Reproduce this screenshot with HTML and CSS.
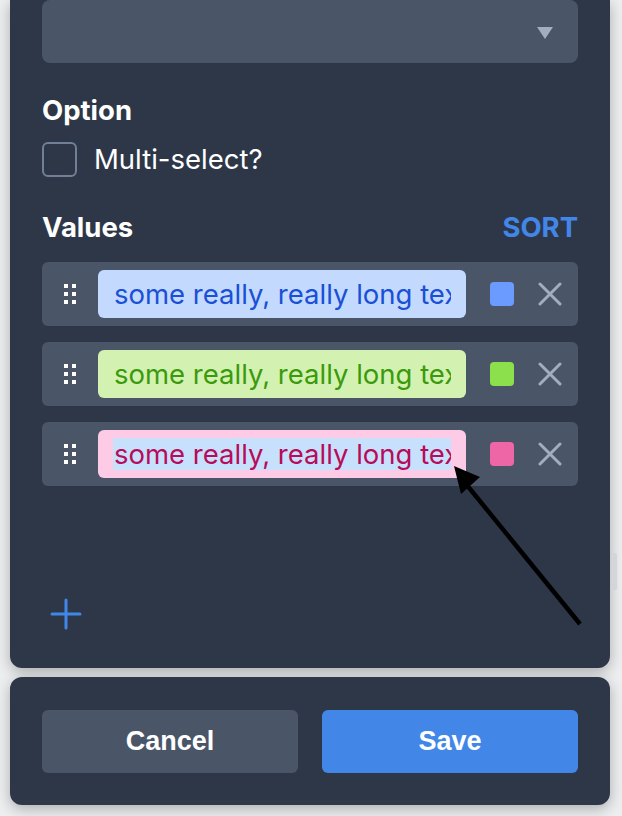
FILE: index.html
```html
<!DOCTYPE html>
<html>
<head>
<meta charset="utf-8">
<link rel="stylesheet" href="styles.css">
</head>
<body>
<div class="page">
  <div class="panel main">
    <div class="dropdown"><span class="caret"></span></div>
    <div class="heading">Option</div>
    <label class="check-row"><span class="checkbox"></span><span>Multi-select?</span></label>
    <div class="values-head"><span class="heading">Values</span><span class="sort">SORT</span></div>
    <div class="rows">
      <div class="row">
        <span class="handle"><i></i><i></i><i></i><i></i><i></i><i></i></span>
        <div class="field blue"><div class="clip"><span>some really, really long text</span></div></div>
        <span class="swatch sw-blue"></span>
        <svg class="x" width="24" height="24" viewBox="0 0 24 24"><path d="M2 2L22 22M22 2L2 22" stroke="#a0aec0" stroke-width="3" stroke-linecap="round"/></svg>
      </div>
      <div class="row">
        <span class="handle"><i></i><i></i><i></i><i></i><i></i><i></i></span>
        <div class="field green"><div class="clip"><span>some really, really long text</span></div></div>
        <span class="swatch sw-green"></span>
        <svg class="x" width="24" height="24" viewBox="0 0 24 24"><path d="M2 2L22 22M22 2L2 22" stroke="#a0aec0" stroke-width="3" stroke-linecap="round"/></svg>
      </div>
      <div class="row">
        <span class="handle"><i></i><i></i><i></i><i></i><i></i><i></i></span>
        <div class="field pink"><div class="clip"><span class="sel">some really, really long text</span></div></div>
        <span class="swatch sw-pink"></span>
        <svg class="x" width="24" height="24" viewBox="0 0 24 24"><path d="M2 2L22 22M22 2L2 22" stroke="#a0aec0" stroke-width="3" stroke-linecap="round"/></svg>
      </div>
    </div>
    <svg class="plus" width="32" height="32" viewBox="0 0 32 32"><path d="M16 2V30M2 16H30" stroke="#4287e8" stroke-width="3" stroke-linecap="round"/></svg>
  </div>
  <div class="panel footer">
    <button class="btn cancel">Cancel</button>
    <button class="btn save">Save</button>
  </div>
  <span class="scroll"></span>
  <svg class="arrow" width="622" height="816" viewBox="0 0 622 816"><path d="M580 624L466 484" stroke="#000" stroke-width="4.5"/><path d="M454 466L480 477L461 494Z" fill="#000"/></svg>
</div>
</body>
</html>
```
FILE: styles.css
```css
html, body { margin: 0; padding: 0; }
body {
  background: #eceef0;
  font-family: Inter, "Noto Sans", sans-serif;
  width: 622px;
  height: 816px;
  overflow: hidden;
}
.page { position: relative; padding: 0 12px 0 10px; }
.panel {
  background: #2d3748;
  width: 600px;
  box-sizing: border-box;
  color: #fff;
  box-shadow: 0 4px 14px rgba(0,0,0,0.28);
}
.main {
  border-radius: 0 0 12px 12px;
  padding: 0 32px 38px;
  display: flex;
  flex-direction: column;
}
.dropdown {
  height: 63px;
  background: #4a5568;
  border-radius: 8px;
  display: flex;
  justify-content: flex-end;
  align-items: center;
  padding-right: 25px;
}
.caret {
  width: 0; height: 0;
  border-left: 8px solid transparent;
  border-right: 8px solid transparent;
  border-top: 12px solid #a0aec0;
  margin-top: 2px;
}
.heading {
  font-size: 27.5px;
  font-weight: 700;
  line-height: 32px;
}
.main > .heading { margin-top: 31px; }
.check-row {
  display: flex;
  align-items: center;
  gap: 17px;
  margin-top: 16px;
  font-size: 27.5px;
  line-height: 35px;
}
.checkbox {
  width: 31px; height: 31px;
  border: 2.5px solid #718096;
  border-radius: 6px;
  flex: none;
}
.values-head {
  display: flex;
  justify-content: space-between;
  align-items: center;
  margin-top: 33px;
}
.sort {
  color: #4287e8;
  font-size: 27.5px;
  font-weight: 700;
}
.rows {
  display: flex;
  flex-direction: column;
  gap: 16px;
  margin-top: 18px;
}
.row {
  height: 64px;
  background: #4a5568;
  border-radius: 6px;
  display: flex;
  align-items: center;
  padding: 0 16px 0 22px;
}
.handle {
  display: grid;
  grid-template-columns: 4px 4px;
  column-gap: 4px;
  row-gap: 4px;
  width: 12px;
  margin-right: 22px;
}
.handle i { display: block; width: 4px; height: 4px; background: #fff; }
.field {
  width: 368px;
  height: 48px;
  box-sizing: border-box;
  border-radius: 6px;
  padding: 0 15px 0 15px;
  margin-right: 24px;
  flex: none;
  display: flex;
  align-items: center;
}
.clip {
  flex: 1;
  overflow: hidden;
  white-space: nowrap;
  font-size: 27.5px;
  line-height: 32px;
}
.clip span { padding-left: 1px; }
.blue { background: #c3dafe; color: #1a4fd6; }
.green { background: #d3f2b2; color: #3b9a0c; }
.pink { background: #fecbe7; color: #b80b5a; }
.sel { background: #c7e1fd; }
.swatch { width: 24px; height: 24px; border-radius: 4px; margin-right: 24px; flex: none; }
.sw-blue { background: #6b9bff; }
.sw-green { background: #8be04c; }
.sw-pink { background: #ef66a6; }
.x { flex: none; }
.plus { margin-top: 112px; margin-left: 8px; }
.footer {
  margin-top: 9px;
  border-radius: 12px;
  padding: 33px 32px 32px;
  display: flex;
  gap: 24px;
}
.btn {
  flex: 1;
  height: 63px;
  border: 0;
  border-radius: 6px;
  color: #fff;
  font-family: "Liberation Sans", Arial, sans-serif;
  font-weight: 700;
  font-size: 27px;
  padding: 0;
}
.cancel { background: #4a5568; }
.save { background: #4287e8; }
.scroll {
  position: absolute;
  left: 612px; top: 553px;
  width: 5px; height: 37px;
  background: #d3d5d9;
  border-radius: 2px;
}
.arrow { position: absolute; left: 0; top: 0; pointer-events: none; }
```
